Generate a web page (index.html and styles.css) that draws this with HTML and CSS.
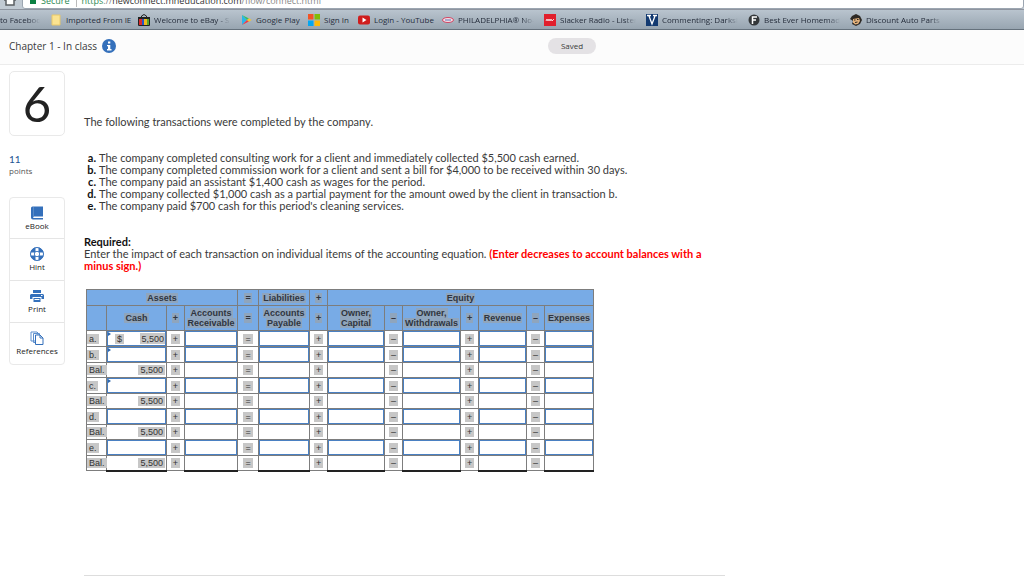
FILE: index.html
```html
<!DOCTYPE html>
<html lang="en">
<head>
<meta charset="utf-8">
<title>Chapter 1 - In class</title>
<link rel="stylesheet" href="styles.css">
</head>
<body>
<div class="browser">
  <div class="toolbar">
    <svg class="home" viewBox="0 0 12 14"><path d="M0 6 6 0l6 6v2h-2v5H2V8H0z" fill="#fff" stroke="#5b5f63" stroke-width="1.500"/></svg>
    <div class="address"><span class="lock"></span><span class="secure">Secure</span><span class="split"></span><span class="url"><span class="secure">https</span>://<b>newconnect.mheducation.com</b>/flow/connect.html</span></div>
  </div>
  <nav class="bookmarks">
    <a href="#" class="w40"><span>to Facebook</span></a>
    <a href="#" class="w62"><svg viewBox="0 0 12 12"><path d="M2 1h8v10H2z" fill="#fbe391" stroke="#e8c86a"/></svg><span>Imported From IE</span></a>
    <a href="#" class="w76"><svg viewBox="0 0 12 12"><path d="M3.500 4V2Q6-1 8.500 2v2" fill="none" stroke="#222"/><path d="M0 3h12v3H0z" fill="#222"/><path d="M1 5h3v6H1z" fill="#d92c2c"/><path d="M4 5h2v6H4z" fill="#2457c8"/><path d="M6 5h3v6H6z" fill="#f0b91c"/><path d="M9 5h2v6H9z" fill="#58a52b"/><path d="M.5 5v6.500h11V5" fill="none" stroke="#222"/></svg><span>Welcome to eBay - Sign</span></a>
    <a href="#" class="w42"><svg viewBox="0 0 12 12"><path d="m2 1 5 5-5 5z" fill="#29b6e8"/><path d="m2 1 7 3.500L7 6z" fill="#35bd6a"/><path d="m2 11 7-3.500L7 6z" fill="#ed3b4b"/><path d="m9 4.300 2.500 1.700L9 7.700 7 6z" fill="#f8c42d"/></svg><span>Google Play</span></a>
    <a href="#" class="w24"><svg viewBox="0 0 12 12"><path d="M0 0h5.500v5.500H0z" fill="#f35325"/><path d="M6.500 0H12v5.500H6.500z" fill="#81bc06"/><path d="M0 6.500h5.500V12H0z" fill="#05a6f0"/><path d="M6.500 6.500H12V12H6.500z" fill="#ffba08"/></svg><span>Sign In</span></a>
    <a href="#" class="w58"><svg viewBox="0 0 12 12"><rect y="1.500" width="12" height="9" rx="2" fill="#cf1d1d"/><path d="m4.500 3.500 4 2.500-4 2.500z" fill="#fff"/></svg><span>Login - YouTube</span></a>
    <a href="#" class="w76"><svg viewBox="0 0 12 12"><ellipse cx="6" cy="6" rx="5.500" ry="2.500" fill="#f7dfe5" stroke="#d24765"/><path d="M3 6h6" stroke="#5a73b5"/></svg><span>PHILADELPHIA® No-Bake</span></a>
    <a href="#" class="w76"><svg viewBox="0 0 12 12"><path d="M0 0h12v12H0z" fill="#e11f2c"/><path d="m2 7 1-2 1 2 1-2 1 2 1-2 1 2 2-2" fill="none" stroke="#fff" stroke-width=".8"/></svg><span>Slacker Radio - Listen to</span></a>
    <a href="#" class="w76"><svg viewBox="0 0 12 12"><path d="M0 0h12v12H0z" fill="#123970"/><path d="M1 1.500h4M7 1.500h4M3 2l3 8 3-8" fill="none" stroke="#fff" stroke-width="1.300"/></svg><span>Commenting: Darksiders</span></a>
    <a href="#" class="w76"><svg viewBox="0 0 12 12"><circle cx="6" cy="6" r="5.500" fill="#34383a"/><path d="M4.500 10V3H9M4.500 6H8" fill="none" stroke="#fff" stroke-width="1.500"/></svg><span>Best Ever Homemade Fl</span></a>
    <a href="#" class="w76"><svg viewBox="0 0 12 12"><path d="m0 5 2-3 4-2 4 2 2 4-2 4-4 2-4-2 1-3z" fill="#2d2925"/><path d="m3 5 6-1 1 3-2 3-3 .5-2-2z" fill="#e4b27c"/><path d="M4 6h1.500M7 5.500h1.500M5 8.500l2.500-.5" stroke="#2d2925"/></svg><span>Discount Auto Parts a</span></a>
  </nav>
</div>
<header class="header">
  <div class="chapter"><span>Chapter 1 - In class</span><button class="info" aria-label="Information"><svg viewBox="0 0 14 14"><circle cx="7" cy="7" r="7" fill="#3470bb"/><path d="M6 2.500h2.300v2H6zM5 6h3.300v4H9.500v1.500H5V10h1V7.300H5z" fill="#fff"/></svg></button></div>
  <div class="saved">Saved</div>
</header>
<div class="page">
  <aside class="side">
    <div class="number">6</div>
    <div class="points"><strong>11</strong><span>points</span></div>
    <div class="tools">
      <button><svg viewBox="0 0 14 14"><path d="M2.500 .5H13v10H3.500v1.500H13V13.500H3Q1 13.500 1 11.500V2Q1 .5 2.500 .5z" fill="#3470bb"/><path d="M3.500 11.500H13" stroke="#fff"/><path d="M3.500 1v9" stroke="#6795cd" stroke-width=".7"/></svg><span>eBook</span></button>
      <button><svg viewBox="0 0 14 14"><circle cx="7" cy="7" r="4.700" fill="none" stroke="#3470bb" stroke-width="4"/><path d="M7 0v4M7 10v4M0 7h4M10 7h4" stroke="#fff" stroke-width="3"/><circle cx="7" cy="7" r="6.500" fill="none" stroke="#3470bb"/><circle cx="7" cy="7" r="2.700" fill="none" stroke="#3470bb" stroke-width=".8"/></svg><span>Hint</span></button>
      <button><svg viewBox="0 0 14 14"><path d="M3 1h8v3H3zM1 5h12l1 1v4h-2.500V8h-9v2H0V6zM3.500 9h7v4h-7z" fill="#3470bb"/><path d="M4.500 10.500h5M11 6.500h1.500" stroke="#fff"/></svg><span>Print</span></button>
      <button><svg viewBox="0 0 14 14"><path d="M1 1h6l1 1v8H1zM3.500 2.500h6v9h-6z" fill="#fff" stroke="#5c8fce"/><path d="M5.500 4H10l3 3v6.500H5.500zM10 4v3h3" fill="#fff" stroke="#3470bb"/></svg><span>References</span></button>
    </div>
  </aside>
  <main class="question">
    <p class="intro">The following transactions were completed by the company.</p>
    <ol class="events">
      <li>The company completed consulting work for a client and immediately collected $5,500 cash earned.</li>
      <li>The company completed commission work for a client and sent a bill for $4,000 to be received within 30 days.</li>
      <li>The company paid an assistant $1,400 cash as wages for the period.</li>
      <li>The company collected $1,000 cash as a partial payment for the amount owed by the client in transaction b.</li>
      <li>The company paid $700 cash for this period's cleaning services.</li>
    </ol>
    <p class="required"><b>Required:</b><br>Enter the impact of each transaction on individual items of the accounting equation. <b class="warn">(Enter decreases to account balances with a minus sign.)</b></p>
    <table class="equation">
      <colgroup><col class="c20"><col class="c60"><col class="c18"><col class="c53"><col class="c21"><col class="c51"><col class="c18"><col class="c57"><col class="c18"><col class="c58"><col class="c18"><col class="c48"><col class="c18"><col class="c49"></colgroup>
      <thead>
        <tr class="groups"><th colspan="4"><mark>Assets</mark></th><th><mark>=</mark></th><th><mark>Liabilities</mark></th><th><mark>+</mark></th><th colspan="7"><mark>Equity</mark></th></tr>
        <tr class="accounts"><th></th><th><mark>Cash</mark></th><th><mark>+</mark></th><th><mark>Accounts Receivable</mark></th><th><mark>=</mark></th><th><mark>Accounts Payable</mark></th><th><mark>+</mark></th><th><mark>Owner, Capital</mark></th><th><mark>–</mark></th><th><mark>Owner, Withdrawals</mark></th><th><mark>+</mark></th><th><mark>Revenue</mark></th><th><mark>–</mark></th><th><mark>Expenses</mark></th></tr>
      </thead>
      <tbody id="rows"></tbody>
    </table>
  </main>
</div>
<script src="table.js"></script>
</body>
</html>
```

FILE: styles.css
```css
* { box-sizing: border-box; }
body { margin: 0; min-height: 100vh; display: flex; flex-direction: column; background: #fff; color: #3a3a3a; font-family: Lato, "Open Sans", sans-serif; font-size: 11px; line-height: 12px; font-variant-ligatures: none; }
button { border: 0; padding: 0; background: none; font: inherit; color: inherit; }
p, ol { margin: 0; padding: 0; }

.toolbar { display: flex; align-items: flex-end; height: 9px; overflow: hidden; background: #c1cad3; padding-left: 4px; }
.home { width: 12px; height: 14px; margin-right: 6px; margin-bottom: 3px; flex: none; }
.address { flex: 1; display: flex; align-items: center; height: 16px; padding: 0 8px 0 7px; background: #fff; border: 1px solid #9ca6b1; border-radius: 3px; font-family: "Open Sans", sans-serif; font-size: 9px; color: #888; white-space: nowrap; }
.address b { font-weight: 400; color: #333; }
.lock { width: 6px; height: 6px; margin-right: 5px; background: #0b8043; }
.secure { color: #2c8a53; }
.split { width: 1px; height: 12px; margin: 0 5px 0 6px; background: #bbb; }
.bookmarks { display: flex; gap: 10px; align-items: center; height: 21px; background: linear-gradient(#b9c4ce, #98a5b1); border-top: 1px solid #8e949f; border-bottom: 1px solid #65717c; overflow: hidden; }
.bookmarks a { display: flex; flex: none; gap: 4px; color: #252d3b; text-decoration: none; font-family: "Open Sans", sans-serif; font-size: 8px; white-space: nowrap; }
.bookmarks svg { width: 12px; height: 12px; flex: none; }
.w40 span { width: 40px; overflow: hidden; }
.w62 span { width: 62px; }
.w42 span { width: 42px; }
.w24 span { width: 24px; }
.w58 span { width: 58px; }
.w76 span { width: 76px; overflow: hidden; }
.w40 span, .w76 span { mask-image: linear-gradient(to left, transparent, #000 12px); }

.header { display: grid; grid-template-columns: 539fr auto 428fr; align-items: center; height: 35px; padding: 0 0 0 9px; background: #fcfcfc; border-bottom: 1px solid #ececec; }
.chapter { display: flex; align-items: center; gap: 5px; font-size: 10px; padding-bottom: 2px; font-family: "Open Sans", sans-serif; }
.info, .info svg { display: block; width: 14px; height: 14px; }
.saved { width: 48px; height: 16px; margin-bottom: 2px; border-radius: 8px; background: #e4e2e5; text-align: center; font: 8px/15px "Open Sans", sans-serif; }

.page { flex: 1; display: flex; gap: 19px; padding: 6px 9px 0; }
.side { width: 56px; flex: none; }
.number { height: 65px; border: 1px solid #e9e9e9; border-radius: 5px; text-align: center; font-size: 49px; line-height: 62px; color: #222; }
.points { margin: 18px 0 21px; font-size: 9px; line-height: 11px; }
.points strong, .points span { display: block; }
.points strong { color: #235493; font-weight: 400; font-size: 10px; }
.points span { font-family: "Open Sans", sans-serif; font-size: 8px; color: #555; }
.tools { border: 1px solid #e9e9e9; border-radius: 4px; }
.tools button { display: flex; flex-direction: column; align-items: center; justify-content: center; gap: 1px; width: 100%; height: 40px; font-family: "Open Sans", sans-serif; font-size: 8px; line-height: 10px; color: #222; }
.tools button + button { border-top: 1px solid #e5e5e5; height: 42px; }
.tools svg { width: 14px; height: 14px; }

.question { width: 641px; padding-top: 45px; border-bottom: 1px solid #ddd; }
.events { margin: 24px 0 24px; list-style: none; counter-reset: event; }
.events li { display: flex; counter-increment: event; }
.events li::before { content: counter(event, lower-alpha) "."; width: 12px; margin-right: 3px; text-align: right; font-weight: 700; color: #111; }
.required b { color: #111; }
.required .warn { color: #f00; }

.equation { width: 507px; margin: 17px 0 0 2px; border-collapse: collapse; table-layout: fixed; font-family: "Liberation Sans", sans-serif; font-size: 9px; line-height: 10px; color: #333; }
.equation th, .equation td { padding: 0; border: 1px solid #7d7d7d; white-space: nowrap; }
.equation th { background: #78abe6; white-space: normal; }
.equation mark { padding: 0 2px; background: #c7c7c7; color: #333; }
.equation th mark { padding: 0 1px; background: #8fa5bd; color: #2f3540; box-decoration-break: clone; }
.groups { height: 16px; }
.accounts { height: 25px; }
.entry { height: 16px; }
.balance { height: 15px; }
.equation .sign { text-align: center; }
.equation .amount { text-align: right; }
.balance .amount { border-top: 1px solid #111; }
.balance:last-child .amount { border-bottom: 2px solid #222; }
.cell { display: flex; position: relative; height: 15px; align-items: center; justify-content: space-between; border: 1px solid #4a80c2; }
.cell input { flex: 1; min-width: 0; width: 100%; height: 12px; border: 0; padding: 0 1px; background: transparent; text-align: right; font: inherit; color: inherit; outline: 0; }
.cell mark { margin-left: 7px; }
.cell .filled { flex: none; width: 25px; height: 11px; background: #c7c7c7; }
.balance .amount mark { margin-right: 1px; }
.flag::before { content: ""; position: absolute; left: 0; top: 0; border: 2px solid transparent; border-left: 3px solid #2f68ad; }
.c20 { width: 20px; }
.c21 { width: 21px; }
.c60 { width: 60px; }
.c18 { width: 18px; }
.c53 { width: 53px; }
.c51 { width: 51px; }
.c57 { width: 57px; }
.c58 { width: 58px; }
.c48 { width: 48px; }
.c49 { width: 49px; }
```

FILE: table.js
```js
const accounts = ["Cash", "Accounts Receivable", "Accounts Payable", "Owner, Capital", "Owner, Withdrawals", "Revenue", "Expenses"];
const signs = ["+", "=", "+", "–", "+", "–"];
const labels = ["a.", "b.", "Bal.", "c.", "Bal.", "d.", "Bal.", "e.", "Bal."];
const flagged = ["a.", "b.", "c."];

document.getElementById("rows").innerHTML = labels.map(label => {
  const balance = label === "Bal.";
  const cells = accounts.map((account, i) => {
    const sign = i < signs.length ? `<td class="sign"><mark>${signs[i]}</mark></td>` : "";
    if (balance) return `<td class="amount">${i === 0 ? "<mark>5,500</mark>" : ""}</td>${sign}`;
    const filled = label === "a." && i === 0;
    const flag = i === 0 && flagged.includes(label) ? " flag" : "";
    return `<td class="field"><div class="cell${flag}">${filled ? "<mark>$</mark>" : ""}<input type="text" aria-label="${label} ${account}"${filled ? ' class="filled" value="5,500"' : ""}></div></td>${sign}`;
  }).join("");
  return `<tr class="${balance ? "balance" : "entry"}"><td><mark>${label}</mark></td>${cells}</tr>`;
}).join("");
```
